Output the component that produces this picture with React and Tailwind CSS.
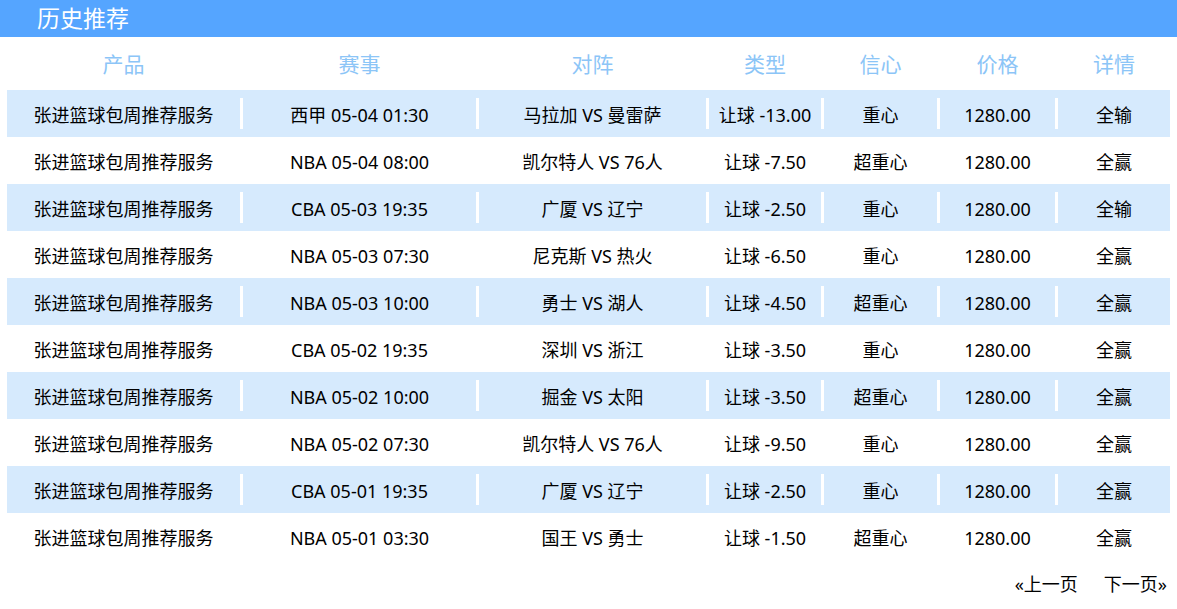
const rows = [
  ["西甲 05-04 01:30", "马拉加 VS 曼雷萨", "让球 -13.00", "重心", "全输"],
  ["NBA 05-04 08:00", "凯尔特人 VS 76人", "让球 -7.50", "超重心", "全赢"],
  ["CBA 05-03 19:35", "广厦 VS 辽宁", "让球 -2.50", "重心", "全输"],
  ["NBA 05-03 07:30", "尼克斯 VS 热火", "让球 -6.50", "重心", "全赢"],
  ["NBA 05-03 10:00", "勇士 VS 湖人", "让球 -4.50", "超重心", "全赢"],
  ["CBA 05-02 19:35", "深圳 VS 浙江", "让球 -3.50", "重心", "全赢"],
  ["NBA 05-02 10:00", "掘金 VS 太阳", "让球 -3.50", "超重心", "全赢"],
  ["NBA 05-02 07:30", "凯尔特人 VS 76人", "让球 -9.50", "重心", "全赢"],
  ["CBA 05-01 19:35", "广厦 VS 辽宁", "让球 -2.50", "重心", "全赢"],
  ["NBA 05-01 03:30", "国王 VS 勇士", "让球 -1.50", "超重心", "全赢"],
];

// column widths between the 3px separators
const widths = ["w-[233px]", "w-[233px]", "w-[227px]", "w-[112px]", "w-[113px]", "w-[115px]", "w-[112px]"];
const heads = ["产品", "赛事", "对阵", "类型", "信心", "价格", "详情"];

function Sep() {
  return <div className="w-[3px] h-[31px] bg-white shrink-0" />;
}

function Row({ cells, blue }) {
  return (
    <div className={`flex items-center h-[47px] ${blue ? "bg-[#d6eafd]" : "bg-white"}`}>
      {cells.map((c, i) => (
        <div key={i} className="contents">
          {i > 0 && <Sep />}
          <div className={`${widths[i]} shrink-0 text-center whitespace-nowrap pt-[3px]`}>{c}</div>
        </div>
      ))}
    </div>
  );
}

export default function App() {
  return (
    <div className="w-[1177px] h-[609px] bg-white font-['Noto_Sans','Noto_Sans_CJK_SC',sans-serif] text-black overflow-hidden">
      <div className="h-[37px] bg-[#55a5ff] flex items-center pl-[37px] text-white text-[23px]">历史推荐</div>
      <div className="px-[7px]">
        <div className="flex items-center h-[53px] pt-[3px] text-[21px] text-[#8cc5f7]">
          {heads.map((h, i) => (
            <div key={i} className="contents">
              {i > 0 && <div className="w-[3px] shrink-0" />}
              <div className={`${widths[i]} shrink-0 text-center`}>{h}</div>
            </div>
          ))}
        </div>
        <div className="text-[18px]">
          {rows.map((r, i) => (
            <Row key={i} blue={i % 2 === 0} cells={["张进篮球包周推荐服务", ...r.slice(0, 4), "1280.00", r[4]]} />
          ))}
        </div>
        <div className="h-[49px] flex items-center justify-end gap-[26px] pr-[3px] text-[18px]">
          <span>«上一页</span>
          <span>下一页»</span>
        </div>
      </div>
    </div>
  );
}
